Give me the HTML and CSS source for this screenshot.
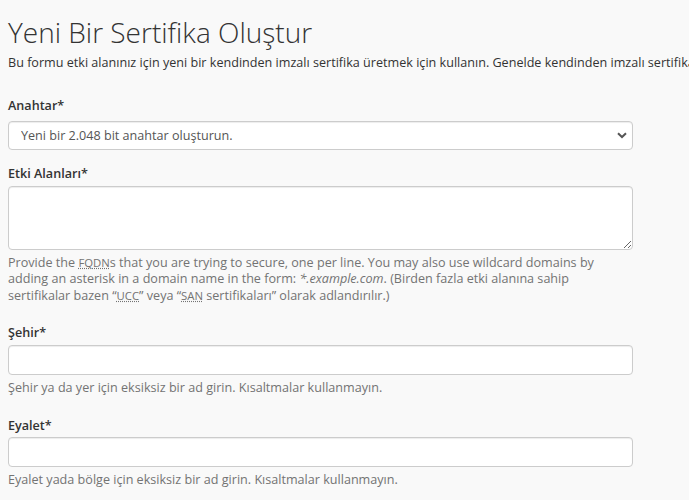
FILE: index.html
```html
<!DOCTYPE html>
<html lang="tr">
<head>
    <meta charset="UTF-8">
    <title>Yeni Bir Sertifika Oluştur</title>
    <link rel="stylesheet" href="styles.css">
</head>
<body>
    <div class="page">
        <h1>Yeni Bir Sertifika Oluştur</h1>
        <p class="intro">Bu formu etki alanınız için yeni bir kendinden imzalı sertifika üretmek için kullanın. Genelde kendinden imzalı sertifikalar kullanmanız önerilmez.</p>

        <form class="cert-form">
            <div class="form-group">
                <label for="key">Anahtar*</label>
                <div class="select-wrap">
                    <select id="key" class="form-control">
                        <option>Yeni bir 2.048 bit anahtar oluşturun.</option>
                    </select>
                    <svg class="select-arrow" width="10" height="7" viewBox="0 0 10 7"><path d="M1 1.2 L5 5 L9 1.2" fill="none" stroke="#555" stroke-width="2"/></svg>
                </div>
            </div>

            <div class="form-group">
                <label for="domains">Etki Alanları*</label>
                <textarea id="domains" class="form-control" rows="3"></textarea>
                <span class="help-block">Provide the <abbr title="Fully Qualified Domain Name">FQDN</abbr>s that you are trying to secure, one per line. You may also use wildcard domains by adding an asterisk in a domain name in the form: <em>*.example.com</em>. (Birden fazla etki alanına sahip sertifikalar bazen “<abbr title="Unified Communications Certificate">UCC</abbr>” veya “<abbr title="Subject Alternative Name">SAN</abbr> sertifikaları” olarak adlandırılır.)</span>
            </div>

            <div class="form-group">
                <label for="city">Şehir*</label>
                <input type="text" id="city" class="form-control">
                <span class="help-block">Şehir ya da yer için eksiksiz bir ad girin. Kısaltmalar kullanmayın.</span>
            </div>

            <div class="form-group">
                <label for="state">Eyalet*</label>
                <input type="text" id="state" class="form-control">
                <span class="help-block">Eyalet yada bölge için eksiksiz bir ad girin. Kısaltmalar kullanmayın.</span>
            </div>
        </form>
    </div>
</body>
</html>
```

FILE: styles.css
```css
body {
    margin: 0;
    background-color: #f9f9f9;
    font-family: "Open Sans", Arial, sans-serif;
    font-size: 12.6px;
    line-height: 1.32;
    color: #333;
}
.page {
    padding: 0 8px;
    overflow: hidden;
}
h1 {
    margin: 17px 0 7px;
    font-size: 28px;
    font-weight: 300;
    line-height: 1.1;
    color: #333;
}
.intro {
    margin: 0 0 27px;
    white-space: nowrap;
}
.cert-form {
    width: 625px;
}
.form-group {
    margin-bottom: 16px;
}
label {
    display: block;
    margin-bottom: 3px;
    font-weight: 600;
}
.select-wrap {
    position: relative;
    margin-top: 6px;
}
.form-control {
    display: block;
    box-sizing: border-box;
    width: 100%;
    height: 29px;
    padding: 4px 12px;
    font-family: inherit;
    font-size: 12.6px;
    color: #555;
    background-color: #fff;
    border: 1px solid #ccc;
    border-radius: 4px;
    box-shadow: inset 0 1px 1px rgba(0, 0, 0, 0.075);
}
input.form-control {
    height: 30px;
}
textarea.form-control {
    height: 64px;
}
select.form-control {
    appearance: none;
    -webkit-appearance: none;
}
.select-arrow {
    position: absolute;
    right: 6px;
    top: 11px;
    pointer-events: none;
}
.help-block {
    display: block;
    margin-top: 5px;
    margin-bottom: 21px;
    color: #737373;
}
abbr {
    font-size: 90%;
    text-decoration: underline dotted;
    cursor: help;
}
```
